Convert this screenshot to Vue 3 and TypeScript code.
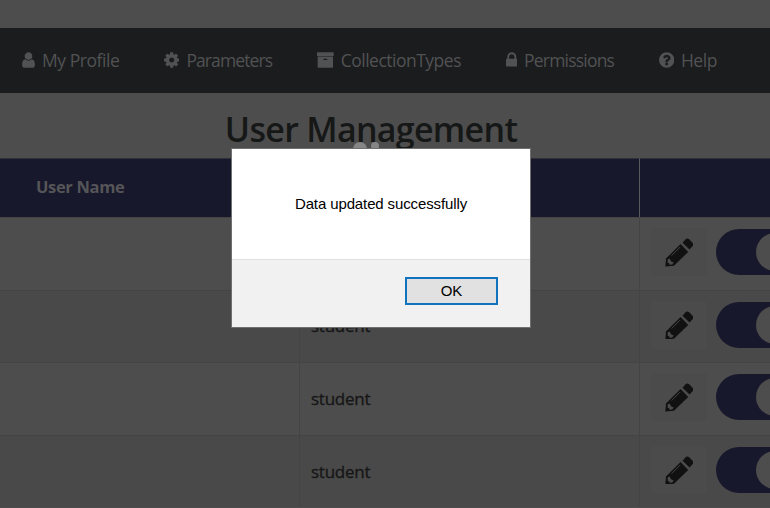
<script setup lang="ts">
interface NavItem {
  key: string
  label: string
  viewBox: string
  width: number
  path: string
}

const navItems: NavItem[] = [
  {
    key: 'profile',
    label: 'My Profile',
    viewBox: '256 0 1280 1792',
    width: 13,
    path: 'M1536 1399q0 109-62.5 187t-150.5 78h-854q-88 0-150.5-78t-62.5-187q0-85 8.5-160.5t31.5-152 58.5-131 94-89 134.5-34.5q131 128 313 128t313-128q76 0 134.5 34.5t94 89 58.5 131 31.5 152 8.5 160.5zm-256-887q0 159-112.5 271.5t-271.5 112.5-271.5-112.5-112.5-271.5 112.5-271.5 271.5-112.5 271.5 112.5 112.5 271.5z',
  },
  {
    key: 'parameters',
    label: 'Parameters',
    viewBox: '128 0 1536 1792',
    width: 15.4,
    path: 'M1152 896q0-106-75-181t-181-75-181 75-75 181 75 181 181 75 181-75 75-181zm512-109v222q0 12-8 23t-20 13l-185 28q-19 54-39 91 35 50 107 138 10 12 10 25t-9 23q-27 37-99 108t-94 71q-12 0-26-9l-138-108q-44 23-91 38-16 136-29 186-7 28-36 28h-222q-14 0-24.5-8.5t-11.5-21.5l-28-184q-49-16-90-37l-141 107q-10 9-25 9-14 0-25-11-126-114-165-168-7-10-7-23 0-12 8-23 15-21 51-66.5t54-70.5q-27-50-41-99l-183-27q-13-2-21-12.5t-8-23.5v-222q0-12 8-23t19-13l186-28q14-46 39-92-40-57-107-138-10-12-10-24 0-10 9-23 26-36 98.5-107.5t94.5-71.5q13 0 26 10l138 107q44-23 91-38 16-136 29-186 7-28 36-28h222q14 0 24.5 8.5t11.5 21.5l28 184q49 16 90 37l142-107q9-9 24-9 13 0 25 10 129 119 165 170 7 8 7 22 0 12-8 23-15 21-51 66.5t-54 70.5q26 50 41 98l183 28q13 2 21 12.5t8 23.5z',
  },
  {
    key: 'collections',
    label: 'CollectionTypes',
    viewBox: '64 0 1664 1792',
    width: 16.7,
    path: 'M1088 832q0-26-19-45t-45-19h-256q-26 0-45 19t-19 45 19 45 45 19h256q26 0 45-19t19-45zm576-192v960q0 26-19 45t-45 19h-1408q-26 0-45-19t-19-45v-960q0-26 19-45t45-19h1408q26 0 45 19t19 45zm64-448v256q0 26-19 45t-45 19h-1536q-26 0-45-19t-19-45v-256q0-26 19-45t45-19h1536q26 0 45 19t19 45z',
  },
  {
    key: 'permissions',
    label: 'Permissions',
    viewBox: '320 0 1152 1792',
    width: 11.6,
    path: 'M640 768h512v-192q0-106-75-181t-181-75-181 75-75 181v192zm832 96v576q0 40-28 68t-68 28h-960q-40 0-68-28t-28-68v-576q0-40 28-68t68-28h32v-192q0-184 132-316t316-132 316 132 132 316v192h32q40 0 68 28t28 68z',
  },
  {
    key: 'help',
    label: 'Help',
    viewBox: '128 0 1536 1792',
    width: 15.4,
    path: 'M1024 1376v-192q0-14-9-23t-23-9h-192q-14 0-23 9t-9 23v192q0 14 9 23t23 9h192q14 0 23-9t9-23zm256-672q0-88-55.5-163t-138.5-116-170-41q-243 0-371 213-15 24 8 42l132 100q7 6 19 6 16 0 25-12 53-68 86-92 34-24 86-24 48 0 85.5 26t37.5 59q0 38-20 61t-68 45q-63 28-115.5 86.5t-52.5 125.5v36q0 14 9 23t23 9h192q14 0 23-9t9-23q0-19 21.5-49.5t54.5-49.5q32-18 49-28.5t46-35 44.5-48 28-60.5 12.5-81zM1664 896a768 768 0 1 1-1536 0a768 768 0 1 1 1536 0z',
  },
]

const rows = [
  { id: 1, role: 'student' },
  { id: 2, role: 'student' },
  { id: 3, role: 'student' },
  { id: 4, role: 'student' },
]
</script>

<template>
  <div class="page">
    <nav class="navbar">
      <a v-for="item in navItems" :key="item.key" class="nav-item" :class="item.key">
        <svg :viewBox="item.viewBox" :width="item.width" height="18" fill="currentColor" fill-rule="evenodd">
          <path :d="item.path" />
        </svg>
        <span class="label">{{ item.label }}</span>
      </a>
    </nav>

    <h1 class="title"><span>User Management</span></h1>

    <div class="table">
      <div class="row head">
        <div class="cell"><span>User Name</span></div>
        <div class="cell"></div>
        <div class="cell"></div>
      </div>
      <div v-for="row in rows" :key="row.id" class="row">
        <div class="cell"></div>
        <div class="cell role">{{ row.role }}</div>
        <div class="cell actions">
          <button class="edit" type="button">
            <svg viewBox="0 0 86 86" width="28.5" height="28.5">
              <path class="ink" d="M53 14 62 4Q67-1 73 4L83 14Q88 20 83 25L74 35Z" />
              <path class="ink" d="M47 18 70 42 27 84 1 86 3 62Z" />
              <path class="shine" d="M20 53 46 27" />
              <path class="tip" d="M8 65 14 62 18 70 26 74 22 80 14 81 13 77 8 74Z" />
            </svg>
          </button>
          <div class="switch"><span class="knob"></span></div>
        </div>
      </div>
    </div>

    <div class="loader"><i class="dot big"></i><i class="dot small"></i></div>

    <div class="dialog">
      <div class="message">Data updated successfully</div>
      <div class="footer"><button class="ok" type="button">OK</button></div>
    </div>
  </div>
</template>

<style>
body {
  background: #4d4d4d;
}
</style>

<style scoped>
.page {
  position: relative;
  box-sizing: border-box;
  width: 770px;
  height: 508px;
  padding-top: 28px;
  overflow: hidden;
  background: #4d4d4d;
}
.navbar {
  display: flex;
  align-items: center;
  box-sizing: border-box;
  height: 65px;
  padding: 0 0 1px 22px;
  background: #1b1c1e;
  color: #515253;
}
.nav-item {
  display: flex;
  align-items: center;
  flex: none;
  gap: 7px;
  width: 142px;
  white-space: nowrap;
  font: 17.5px/26px "Open Sans", sans-serif;
  letter-spacing: -0.45px;
}
.nav-item.parameters {
  width: 153px;
  letter-spacing: -0.9px;
}
.nav-item.collections {
  width: 188.5px;
  letter-spacing: -0.5px;
}
.nav-item.permissions {
  width: 153px;
  letter-spacing: -0.8px;
}
.nav-item svg { flex: none; }
.label { margin-top: -1px; }
.title {
  display: flex;
  justify-content: center;
  box-sizing: border-box;
  height: 64.5px;
  margin: 0;
  padding: 10px 28px 0 0;
  color: #161717;
  font: 600 34px/52px "Open Sans", sans-serif;
  letter-spacing: -0.7px;
}
.table {
  width: 770px;
}
.row {
  display: grid;
  grid-template-columns: 300px 340px 130px;
  box-sizing: border-box;
  height: 72.6px;
}
.row.head {
  height: 59.5px;
}
.row:nth-child(odd) { background: #494949; }
.row.head:nth-child(odd) { background: #18182c; }
.cell {
  display: flex;
  align-items: center;
  box-sizing: border-box;
  min-width: 0;
  border-right: 1px solid #444445;
  border-top: 1px solid #444445;
}
.head .cell {
  padding-left: 36px;
  padding-bottom: 1px;
  border-color: #5a5a5c;
  border-top-color: #30303c;
  color: #555558;
  font: 700 16.5px/24px "Open Sans", sans-serif;
  letter-spacing: -0.35px;
}
.role {
  padding-left: 11px;
  color: #161616;
  font: 17px/24px "Open Sans", sans-serif;
  letter-spacing: -0.25px;
  -webkit-text-stroke: 0.3px #161616;
}
.cell:last-child { border-right: 0; }
.actions {
  padding-left: 11px;
  padding-bottom: 3px;
}
.edit {
  display: flex;
  flex: none;
  align-items: center;
  justify-content: center;
  width: 56px;
  height: 48px;
  padding: 0;
  border: 0;
  border-radius: 4px;
  background: #4b4b4c;
}
.ink { fill: #111; }
.shine {
  fill: none;
  stroke: #444;
  stroke-width: 3;
}
.tip { fill: #4b4b4c; }
.switch {
  display: flex;
  align-items: center;
  flex: none;
  box-sizing: border-box;
  width: 99px;
  height: 46px;
  margin-left: 9px;
  padding-left: 40px;
  border-radius: 23px;
  background: #18182c;
}
.knob {
  width: 38px;
  height: 38px;
  border-radius: 50%;
  background: #4d4d4d;
}
.loader {
  position: absolute;
  left: 353px;
  top: 142px;
  display: flex;
  gap: 4px;
}
.dot {
  width: 14px;
  height: 14px;
  border-radius: 50%;
  background: #858585;
}
.dot.small {
  width: 8px;
  height: 8px;
}
.dialog {
  position: absolute;
  left: 231px;
  top: 148px;
  display: flex;
  flex-direction: column;
  box-sizing: border-box;
  width: 300px;
  height: 180px;
  border: 1px solid #707070;
  background: #fff;
  color: #000;
  font: 15px/20px "Liberation Sans", Arial, sans-serif;
}
.message {
  display: flex;
  align-items: center;
  justify-content: center;
  height: 110px;
  letter-spacing: -0.12px;
}
.footer {
  display: flex;
  justify-content: flex-end;
  align-items: flex-start;
  flex: 1;
  padding: 17px 32px 0 0;
  border-top: 1px solid #dfdfdf;
  background: #f1f1f1;
}
.ok {
  box-sizing: border-box;
  width: 93px;
  height: 28px;
  padding: 0;
  border: 2px solid #0f74bd;
  background: #e1e1e1;
  color: #000;
  font: inherit;
}
</style>
